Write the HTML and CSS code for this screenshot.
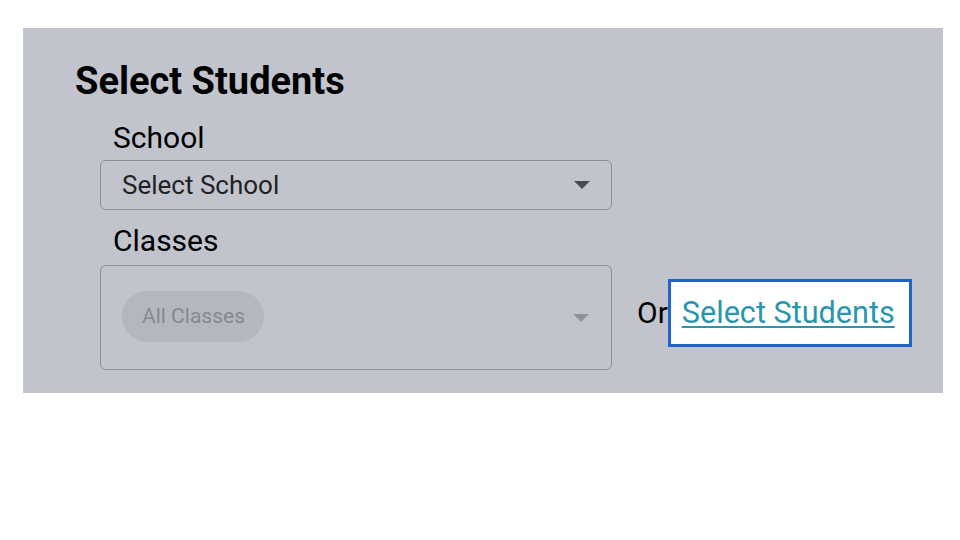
FILE: index.html
```html
<!DOCTYPE html>
<html>
<head>
<meta charset="utf-8">
<link rel="stylesheet" href="styles.css">
</head>
<body>
<div class="panel">
  <h1 class="title">Select Students</h1>
  <div class="form">
    <div class="label">School</div>
    <div class="select">
      <span class="select-text">Select School</span>
      <span class="caret"></span>
    </div>
    <div class="label label-classes">Classes</div>
    <div class="row">
      <div class="multi">
        <span class="chip">All Classes</span>
        <span class="caret caret-light"></span>
      </div>
      <div class="alt"><span class="or">Or</span><a class="link" href="#">Select Students</a></div>
    </div>
  </div>
</div>
</body>
</html>
```
FILE: styles.css
```css
html, body { margin: 0; padding: 0; background: #fff; }
body { font-family: Roboto, "Noto Sans", sans-serif; color: #000; }
.panel {
  margin: 28px 0 0 23px;
  width: 920px;
  height: 365px;
  box-sizing: border-box;
  background: #c1c4cc;
  padding: 31px 0 0 52px;
}
.title {
  margin: 0;
  font-size: 38px;
  font-weight: 700;
  line-height: 44px;
}
.form { margin-left: 25px; margin-top: 18px; }
.label {
  font-size: 30px;
  line-height: 34px;
  padding-left: 13px;
}
.label-classes { margin-top: 14px; }
.select {
  width: 512px;
  height: 50px;
  box-sizing: border-box;
  border: 1px solid #8b8e95;
  border-radius: 6px;
  display: flex;
  align-items: center;
  justify-content: space-between;
  padding: 0 21px 0 21px;
  margin-top: 5px;
}
.select-text { font-size: 26px; color: #222; }
.caret {
  width: 0; height: 0;
  border-left: 8px solid transparent;
  border-right: 8px solid transparent;
  border-top: 8px solid #4a4c52;
}
.caret-light { border-top-color: #8f9299; }
.row { display: flex; align-items: center; margin-top: 7px; }
.multi {
  width: 512px;
  height: 105px;
  box-sizing: border-box;
  border: 1px solid #8b8e95;
  border-radius: 6px;
  display: flex;
  align-items: center;
  justify-content: space-between;
  padding: 0 22px 0 21px;
}
.chip {
  background: #b4b7be;
  color: #868991;
  font-size: 21px;
  height: 51px;
  line-height: 51px;
  padding: 0 19px 0 20px;
  border-radius: 26px;
  margin-top: -2px;
}
.alt {
  display: flex;
  align-items: baseline;
  margin-left: 25px;
  margin-bottom: 9px;
}
.or { font-size: 30px; }
.link {
  display: inline-block;
  position: relative;
  margin-left: 0;
  background: #fff;
  border: 3px solid #1f62d0;
  padding: 0 14px 0 11px;
  height: 62px;
  line-height: 62px;
  font-size: 30.6px;
  color: #2896af;
  text-decoration: underline;
  text-underline-offset: 3px;
  text-decoration-thickness: 2px;
}
```
